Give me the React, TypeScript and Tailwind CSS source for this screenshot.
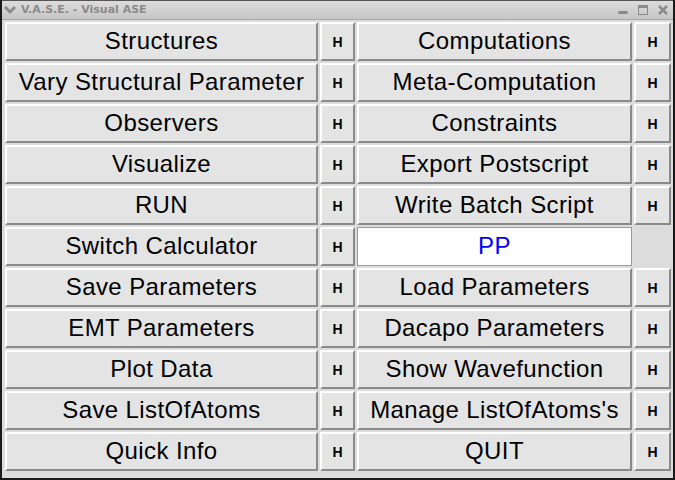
import React from "react";

const rows: [string, boolean, string, boolean][] = [
  ["Structures", true, "Computations", true],
  ["Vary Structural Parameter", true, "Meta-Computation", true],
  ["Observers", true, "Constraints", true],
  ["Visualize", true, "Export Postscript", true],
  ["RUN", true, "Write Batch Script", true],
  ["Switch Calculator", true, "PP", false],
  ["Save Parameters", true, "Load Parameters", true],
  ["EMT Parameters", true, "Dacapo Parameters", true],
  ["Plot Data", true, "Show Wavefunction", true],
  ["Save ListOfAtoms", true, "Manage ListOfAtoms's", true],
  ["Quick Info", true, "QUIT", true],
];

const btn =
  "flex items-center justify-center bg-[#e4e4e4] border-2 border-t-white border-l-white border-b-[#8a8a8a] border-r-[#8a8a8a] text-black";

function Big({ label }: { label: string }) {
  return (
    <div
      className={btn + " text-[24px] leading-none tracking-[0.4px] pb-[2px]"}
      style={{ fontFamily: '"Liberation Sans", Arial, sans-serif' }}
    >
      {label}
    </div>
  );
}

function H() {
  return (
    <div
      className={btn + " text-[14px] font-bold leading-none"}
      style={{ fontFamily: '"Liberation Sans", Arial, sans-serif' }}
    >
      H
    </div>
  );
}

export default function App() {
  return (
    <div className="w-[675px] h-[480px] bg-[#dcdcdc] border-l-2 border-r-2 border-b-2 border-[#1a1a1a] flex flex-col overflow-hidden">
      <div className="h-[20px] shrink-0 flex items-center border-t border-[#555] border-b border-b-[#a8a8a8] bg-gradient-to-b from-[#dcdcdc] to-[#c6c6c6]">
        <svg width="14" height="12" viewBox="0 0 14 12" className="ml-[1px]">
          <path d="M2 3 L7 8 L12 3" stroke="#8a8a8a" strokeWidth="3" fill="none" strokeLinejoin="miter" />
        </svg>
        <span
          className="ml-[4px] text-[11px] font-bold text-[#8a8a8a]"
          style={{ fontFamily: '"DejaVu Sans", sans-serif' }}
        >
          V.A.S.E. - Visual ASE
        </span>
        <div className="ml-auto flex items-center gap-[8px] mr-[4px]">
          <svg width="12" height="12" viewBox="0 0 12 12">
            <rect x="1" y="7" width="10" height="3" rx="1.5" fill="#8a8a8a" />
          </svg>
          <svg width="12" height="12" viewBox="0 0 12 12">
            <rect x="1.5" y="1.5" width="9" height="9" fill="none" stroke="#8a8a8a" strokeWidth="1" />
            <rect x="1" y="1" width="10" height="3" fill="#8a8a8a" />
          </svg>
          <svg width="12" height="12" viewBox="0 0 12 12">
            <path d="M2 2 L10 10 M10 2 L2 10" stroke="#8a8a8a" strokeWidth="2.5" />
          </svg>
        </div>
      </div>
      <div className="pl-[3px] pt-[2px]">
        <div className="grid grid-cols-[313px_35px_275px_37px] auto-rows-[39px] gap-[2px]">
          {rows.map(([a, ha, b, hb], i) => (
            <React.Fragment key={i}>
              <Big label={a} />
              {ha ? <H /> : <div />}
              {b === "PP" ? (
                <div
                  className="flex items-center justify-center bg-white border border-[#9a9a9a] text-[24px] leading-none tracking-[0.4px] pb-[2px] text-[#0000ff]"
                  style={{ fontFamily: '"Liberation Sans", Arial, sans-serif' }}
                >
                  PP
                </div>
              ) : (
                <Big label={b} />
              )}
              {hb ? <H /> : <div />}
            </React.Fragment>
          ))}
        </div>
      </div>
    </div>
  );
}
